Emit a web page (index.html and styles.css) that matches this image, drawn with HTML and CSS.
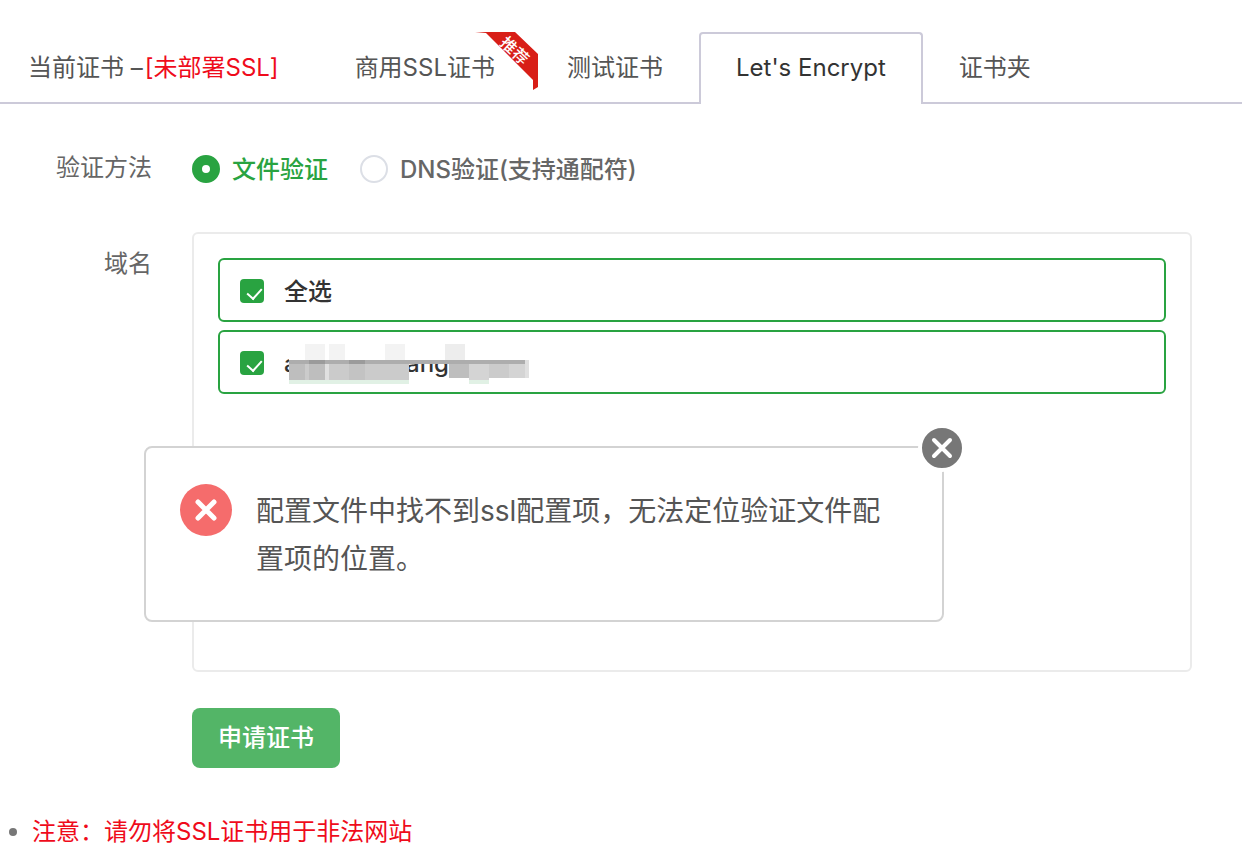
FILE: index.html
```html
<!DOCTYPE html>
<html lang="zh-CN">
<head>
    <meta charset="UTF-8">
    <meta name="viewport" content="width=device-width, initial-scale=1.0">
    <title>SSL</title>
    <link rel="stylesheet" href="styles.css">
</head>
<body>

    <nav class="tabs">
        <a href="#current">当前证书 –<span class="red">[未部署SSL]</span></a>
        <a href="#business">商用SSL证书
            <svg class="ribbon" width="66" height="60" viewBox="0 0 66 60">
                <path d="M0 0H40L63 22V55L58 58V48L11 1Z" fill="#d81e17"/>
                <text class="ribbon-text" transform="translate(24 12) rotate(43)">推荐</text>
            </svg>
        </a>
        <a href="#test">测试证书</a>
        <a href="#lets" class="active">Let's Encrypt</a>
        <a href="#folder">证书夹</a>
    </nav>

    <main>
        <form class="apply-form">
            <div class="line">
                <span class="name">验证方法</span>
                <div class="methods">
                    <input type="radio" name="method" id="fileCheck" checked>
                    <label for="fileCheck">文件验证</label>
                    <input type="radio" name="method" id="dnsCheck">
                    <label for="dnsCheck">DNS验证(支持通配符)</label>
                </div>
            </div>

            <div class="line domain-line">
                <span class="name">域名</span>
                <div class="domains">
                    <div class="domain">
                        <input type="checkbox" id="checkAll" checked>
                        <label for="checkAll">全选</label>
                    </div>
                    <div class="domain">
                        <input type="checkbox" id="domain1" checked>
                        <label for="domain1" class="masked"><span class="first">a</span><span>ang,</span>
                            <svg class="mosaic" width="240" height="40" viewBox="0 0 240 40" shape-rendering="crispEdges">
                                <path fill="#fff" d="M0 0H240V16H0Z"/>
                                <path fill="#f3f3f3" d="M16 0H36V16H16ZM40 0H56V16H40ZM96 0H116V16H96Z"/>
                                <path fill="#ededed" d="M156 0H176V16H156Z"/>
                                <path fill="#cbcbcb" d="M0 20H120V36H0ZM160 20H236V34H160Z"/>
                                <path fill="#bebebe" d="M0 20H16V36H0ZM20 20H36V36H20ZM160 20H180V34H160Z"/>
                                <path fill="#c3c3c3" d="M60 20H76V36H60Z"/>
                                <path fill="#e0e0e0" d="M36 20H40V36H36ZM236 16H240V34H236Z"/>
                                <path fill="#d4d4d4" d="M180 20H200V36H180ZM220 20H236V34H220Z"/>
                                <path fill="#adadad" d="M0 16H236V20H0Z"/>
                                <path fill="#9b9b9b" d="M20 16H36V20H20ZM60 16H76V20H60Z"/>
                                <path fill="#e1f1e5" d="M0 36H120V40H0ZM180 36H200V40H180Z"/>
                            </svg>
                        </label>
                    </div>

                    <div class="message" role="alert">
                        <svg class="error-icon" width="52" height="52" viewBox="0 0 52 52">
                            <circle cx="26" cy="26" r="26" fill="#f56c6c"/>
                            <path d="M18 18L34 34M34 18L18 34" stroke="#fff" stroke-width="5" stroke-linecap="round"/>
                        </svg>
                        <p>配置文件中找不到ssl配置项，无法定位验证文件配置项的位置。</p>
                        <button type="button" class="close" aria-label="关闭">
                            <svg width="48" height="48" viewBox="0 0 48 48">
                                <circle cx="24" cy="24" r="22" fill="#777" stroke="#fff" stroke-width="4"/>
                                <path d="M16 16L32 32M32 16L16 32" stroke="#fff" stroke-width="4" stroke-linecap="round"/>
                            </svg>
                        </button>
                    </div>
                </div>
            </div>

            <button type="button" class="submit">申请证书</button>
        </form>

        <ul class="notes">
            <li>注意：请勿将SSL证书用于非法网站</li>
        </ul>
    </main>

</body>
</html>
```
FILE: styles.css
```css
* {
    box-sizing: border-box;
}

body {
    margin: 0;
    padding-top: 32px;
    background-color: #fff;
    color: #555;
    font-family: Inter, "Noto Sans CJK SC", sans-serif;
    font-size: 24px;
    line-height: 36px;
}

/* Tabs */
.tabs {
    display: flex;
    height: 72px;
    padding-right: 36px;
    box-shadow: inset 0 -2px #cccad9;
}

.tabs a {
    position: relative;
    padding: 18px 36px;
    color: #555;
    text-decoration: none;
    white-space: nowrap;
}

.tabs a:first-child {
    padding-right: 40px;
    padding-left: 28px;
}

.tabs .active {
    padding: 16px 35px;
    border: 2px solid #cccad9;
    border-bottom: 0;
    border-radius: 4px 4px 0 0;
    background-color: #fff;
    color: #333;
}

.tabs .red {
    margin-left: 2px;
    color: #ef0b1b;
}

.ribbon {
    position: absolute;
    top: 0;
    right: -10px;
    overflow: visible;
}

.ribbon-text {
    fill: #fff;
    font-size: 16px;
    font-weight: 500;
}

/* Form */
.apply-form {
    padding: 46px 50px 0 0;
}

.line {
    display: flex;
}

.name {
    flex: 0 0 192px;
    padding-right: 40px;
    color: #666;
    text-align: right;
}

.methods {
    display: flex;
    align-items: center;
    height: 38px;
}

.methods label {
    margin: 0 32px 0 12px;
    padding-top: 2px;
    color: #666;
    font-weight: 500;
}

.methods input {
    appearance: none;
    width: 28px;
    height: 28px;
    margin: 0;
    border: 2px solid #dcdfe6;
    border-radius: 50%;
}

.methods input:checked {
    border: 10px solid #29a341;
}

.methods input:checked + label {
    color: #29a341;
}

.domain-line {
    margin-top: 44px;
}

.domain-line .name {
    padding-top: 14px;
}

.domains {
    position: relative;
    flex: 1;
    min-height: 440px;
    padding: 24px;
    border: 2px solid #ebebeb;
    border-radius: 6px;
}

.domain {
    display: flex;
    align-items: center;
    height: 64px;
    margin-bottom: 8px;
    padding: 2px 20px 0;
    border: 2px solid #29a341;
    border-radius: 6px;
}

.domain input {
    position: relative;
    appearance: none;
    width: 24px;
    height: 24px;
    margin: 0 20px 0 0;
    border-radius: 4px;
    background-color: #29a341;
}

.domain input:checked::after {
    content: "";
    position: absolute;
    top: 6px;
    left: 10px;
    width: 7px;
    height: 12px;
    border: solid #fff;
    border-width: 0 2px 2px 0;
    transform: rotate(42deg);
}

.domain label {
    padding-top: 2px;
    color: #333;
    font-weight: 500;
}

.masked {
    position: relative;
    display: flex;
}

.first {
    width: 122px;
}

.mosaic {
    position: absolute;
    top: 0;
    left: 5px;
}

/* Error message */
.message {
    position: absolute;
    top: 212px;
    left: -50px;
    display: flex;
    gap: 24px;
    width: 800px;
    max-width: 100%;
    min-height: 176px;
    padding: 36px 60px 36px 34px;
    border: 2px solid #d3d3d3;
    border-radius: 8px;
    background-color: #fff;
}

.error-icon {
    flex: none;
}

.message p {
    margin: 3px 0 0;
    font-size: 28px;
    line-height: 48px;
}

.close {
    position: absolute;
    top: -24px;
    right: -24px;
    width: 48px;
    height: 48px;
    padding: 0;
    border: 0;
    background: none;
    cursor: pointer;
}

.submit {
    display: block;
    height: 60px;
    margin: 36px 0 0 192px;
    padding: 0 26px;
    border: 0;
    border-radius: 8px;
    background-color: #53b567;
    color: #fff;
    font: inherit;
    font-weight: 500;
    cursor: pointer;
}

/* Notes */
.notes {
    margin: 46px 0 0;
    padding: 0 0 0 9px;
    list-style: none;
}

.notes li {
    display: flex;
    align-items: center;
    gap: 15px;
    color: #ef0b1b;
}

.notes li::before {
    content: "";
    width: 8px;
    height: 8px;
    border-radius: 50%;
    background-color: #777;
}
```
